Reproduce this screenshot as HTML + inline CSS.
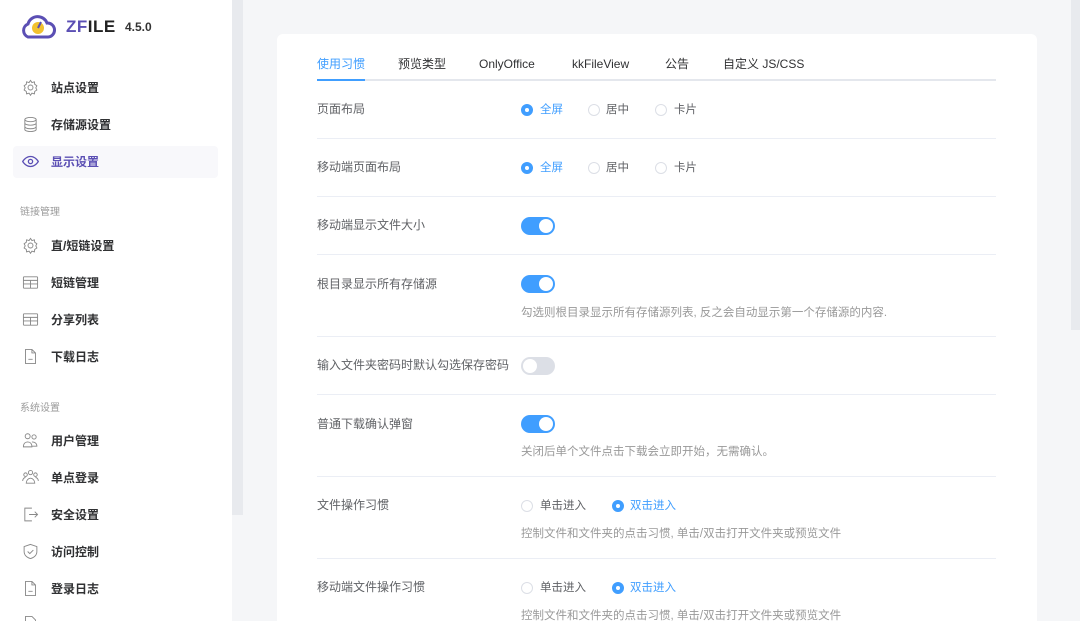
<!DOCTYPE html><html><head><meta charset="utf-8"><style>
*{margin:0;padding:0;box-sizing:border-box}
html,body{width:1080px;height:621px;overflow:hidden}
body{background:#f5f6f8;font-family:"Liberation Sans","Noto Sans CJK SC",sans-serif;position:relative}
div{line-height:14px}
.a{position:absolute;white-space:nowrap}
#side{position:absolute;left:0;top:0;width:232px;height:621px;background:#fff}
#sb{position:absolute;left:232px;top:0;width:11px;height:515px;background:#e8eaee}
.nav{position:absolute;left:51px;font-size:12px;color:#303133;font-weight:bold}
.grp{position:absolute;left:20px;font-size:10px;color:#9a9a9a}
.ic{position:absolute;left:22px;width:17px;height:17px}
#card{position:absolute;left:277px;top:34px;width:760px;height:587px;background:#fff;border-radius:6px 6px 0 0}
.tab{position:absolute;top:57px;font-size:12px;color:#303133}
.lbl{position:absolute;left:317px;font-size:12px;color:#606266}
.hr{position:absolute;left:317px;width:679px;height:1px;background:#ebeef5}
.hint{position:absolute;left:521px;font-size:11.5px;color:#999}
.rd{position:absolute;width:12px;height:12px;border-radius:50%;border:1px solid #dcdfe6;background:#fff}
.rd.on{background:#409eff;border-color:#409eff}
.rd.on:after{content:"";position:absolute;left:3px;top:3px;width:4px;height:4px;border-radius:50%;background:#fff}
.rt{position:absolute;font-size:11.5px;color:#606266}
.rt.on{color:#409eff}
.sw{position:absolute;left:521px;width:34px;height:18px;border-radius:9px;background:#409eff}
.sw:after{content:"";position:absolute;right:2px;top:2px;width:14px;height:14px;border-radius:50%;background:#fff}
.sw.off{background:#dcdfe6}.sw.off:after{right:auto;left:2px}
</style></head><body>
<div id="side">
<svg class="a" style="left:20px;top:13px" width="36" height="28" viewBox="0 0 36 28"><path d="M8 24 A7 7 0 0 1 8 11 A10 10 0 0 1 27 10 A7 7 0 0 1 28 24 Z" fill="none" stroke="#5b4fb4" stroke-width="3"/><circle cx="18" cy="15" r="6" fill="#f2c12e"/><path d="M18 15 L21 9" stroke="#5b4fb4" stroke-width="2"/></svg>
<div class="a" style="left:66px;top:18px;font-size:17px;line-height:18px;font-weight:bold;letter-spacing:0.5px;color:#222"><span style="color:#5b4fb4">ZF</span>ILE</div>
<div class="a" style="left:125px;top:20px;font-size:12px;font-weight:bold;color:#333">4.5.0</div>
<div class="a" style="left:13px;top:146px;width:205px;height:32px;background:#f8f8fb;border-radius:4px"></div>
<svg class="ic" style="top:79px" viewBox="0 0 24 24" fill="none" stroke="#888" stroke-width="1.3"><circle cx="12" cy="12" r="3.5"/><path d="M12 2l2 3 3.5-1 .5 3.5 3 2-1.5 3 1.5 3-3 2-.5 3.5-3.5-1-2 3-2-3-3.5 1-.5-3.5-3-2 1.5-3-1.5-3 3-2 .5-3.5 3.5 1z"/></svg>
<div class="nav" style="top:81px">站点设置</div>
<svg class="ic" style="top:116px" viewBox="0 0 24 24" fill="none" stroke="#888" stroke-width="1.3"><ellipse cx="12" cy="5" rx="8" ry="3"/><path d="M4 5v14c0 1.7 3.6 3 8 3s8-1.3 8-3V5M4 10c0 1.7 3.6 3 8 3s8-1.3 8-3M4 15c0 1.7 3.6 3 8 3s8-1.3 8-3"/></svg>
<div class="nav" style="top:118px">存储源设置</div>
<svg class="ic" style="top:153px" viewBox="0 0 24 24" fill="none" stroke="#5b4fb4" stroke-width="1.8"><path d="M1 12s4-7 11-7 11 7 11 7-4 7-11 7S1 12 1 12z"/><circle cx="12" cy="12" r="3"/></svg>
<div class="nav" style="top:155px;color:#5b4fb4">显示设置</div>
<div class="grp" style="top:206px">链接管理</div>
<svg class="ic" style="top:237px" viewBox="0 0 24 24" fill="none" stroke="#888" stroke-width="1.3"><circle cx="12" cy="12" r="3.5"/><path d="M12 2l2 3 3.5-1 .5 3.5 3 2-1.5 3 1.5 3-3 2-.5 3.5-3.5-1-2 3-2-3-3.5 1-.5-3.5-3-2 1.5-3-1.5-3 3-2 .5-3.5 3.5 1z"/></svg>
<div class="nav" style="top:239px">直/短链设置</div>
<svg class="ic" style="top:274px" viewBox="0 0 24 24" fill="none" stroke="#888" stroke-width="1.3"><rect x="2" y="4" width="20" height="16" rx="1"/><path d="M2 9h20M2 14h20M12 9v11"/></svg>
<div class="nav" style="top:276px">短链管理</div>
<svg class="ic" style="top:311px" viewBox="0 0 24 24" fill="none" stroke="#888" stroke-width="1.3"><rect x="2" y="4" width="20" height="16" rx="1"/><path d="M2 9h20M2 14h20M12 9v11"/></svg>
<div class="nav" style="top:313px">分享列表</div>
<svg class="ic" style="top:348px" viewBox="0 0 24 24" fill="none" stroke="#888" stroke-width="1.3"><path d="M5 2h9l5 5v15H5z M14 2v5h5M9 16h6"/></svg>
<div class="nav" style="top:350px">下载日志</div>
<div class="grp" style="top:402px">系统设置</div>
<svg class="ic" style="top:432px" viewBox="0 0 24 24" fill="none" stroke="#888" stroke-width="1.3"><circle cx="8" cy="6" r="3.5"/><circle cx="17" cy="7" r="3"/><path d="M2 21c0-5 3-7 6-7s6 2 6 7zM14 14c4 0 7 2 7 6h-7"/></svg>
<div class="nav" style="top:434px">用户管理</div>
<svg class="ic" style="top:469px" viewBox="0 0 24 24" fill="none" stroke="#888" stroke-width="1.3"><circle cx="12" cy="5" r="3"/><circle cx="5" cy="8" r="2.5"/><circle cx="19" cy="8" r="2.5"/><path d="M6 20c0-4 3-7 6-7s6 3 6 7zM1 17c0-3 2-5 4-5M23 17c0-3-2-5-4-5"/></svg>
<div class="nav" style="top:471px">单点登录</div>
<svg class="ic" style="top:506px" viewBox="0 0 24 24" fill="none" stroke="#888" stroke-width="1.3"><path d="M14 3H4v18h10M10 12h12M18 8l4 4-4 4"/></svg>
<div class="nav" style="top:508px">安全设置</div>
<svg class="ic" style="top:543px" viewBox="0 0 24 24" fill="none" stroke="#888" stroke-width="1.3"><path d="M12 2l9 3v7c0 5-4 9-9 10-5-1-9-5-9-10V5z M8 12l3 3 5-5"/></svg>
<div class="nav" style="top:545px">访问控制</div>
<svg class="ic" style="top:580px" viewBox="0 0 24 24" fill="none" stroke="#888" stroke-width="1.3"><path d="M5 2h9l5 5v15H5z M14 2v5h5M9 16h6"/></svg>
<div class="nav" style="top:582px">登录日志</div>
<svg class="ic" style="top:615px" viewBox="0 0 24 24" fill="none" stroke="#888" stroke-width="1.3"><path d="M5 2h9l5 5v15H5z"/></svg>
</div>
<div id="sb"></div>
<div class="a" style="left:1071px;top:0;width:9px;height:330px;background:#e8eaee"></div>
<div id="card"></div>
<div class="tab" style="left:317px;color:#409eff">使用习惯</div>
<div class="tab" style="left:398px">预览类型</div>
<div class="tab" style="left:479px">OnlyOffice</div>
<div class="tab" style="left:572px">kkFileView</div>
<div class="tab" style="left:665px">公告</div>
<div class="tab" style="left:723px">自定义 JS/CSS</div>
<div class="hr" style="top:79px;height:2px;background:#e4e7ed"></div>
<div class="a" style="left:317px;top:79px;width:48px;height:2px;background:#409eff"></div>

<div class="lbl" style="top:102px">页面布局</div>
<div class="rd on" style="left:521px;top:104px"></div><div class="rt on" style="left:540px;top:103px">全屏</div>
<div class="rd" style="left:588px;top:104px"></div><div class="rt" style="left:606px;top:103px">居中</div>
<div class="rd" style="left:655px;top:104px"></div><div class="rt" style="left:674px;top:103px">卡片</div>
<div class="hr" style="top:138px"></div>

<div class="lbl" style="top:160px">移动端页面布局</div>
<div class="rd on" style="left:521px;top:162px"></div><div class="rt on" style="left:540px;top:161px">全屏</div>
<div class="rd" style="left:588px;top:162px"></div><div class="rt" style="left:606px;top:161px">居中</div>
<div class="rd" style="left:655px;top:162px"></div><div class="rt" style="left:674px;top:161px">卡片</div>
<div class="hr" style="top:196px"></div>

<div class="lbl" style="top:218px">移动端显示文件大小</div>
<div class="sw" style="top:217px"></div>
<div class="hr" style="top:254px"></div>

<div class="lbl" style="top:277px">根目录显示所有存储源</div>
<div class="sw" style="top:275px"></div>
<div class="hint" style="top:306px">勾选则根目录显示所有存储源列表, 反之会自动显示第一个存储源的内容.</div>
<div class="hr" style="top:336px"></div>

<div class="lbl" style="top:358px">输入文件夹密码时默认勾选保存密码</div>
<div class="sw off" style="top:357px"></div>
<div class="hr" style="top:394px"></div>

<div class="lbl" style="top:417px">普通下载确认弹窗</div>
<div class="sw" style="top:415px"></div>
<div class="hint" style="top:445px">关闭后单个文件点击下载会立即开始，无需确认。</div>
<div class="hr" style="top:476px"></div>

<div class="lbl" style="top:498px">文件操作习惯</div>
<div class="rd" style="left:521px;top:500px"></div><div class="rt" style="left:540px;top:499px">单击进入</div>
<div class="rd on" style="left:612px;top:500px"></div><div class="rt on" style="left:630px;top:499px">双击进入</div>
<div class="hint" style="top:527px">控制文件和文件夹的点击习惯, 单击/双击打开文件夹或预览文件</div>
<div class="hr" style="top:558px"></div>

<div class="lbl" style="top:580px">移动端文件操作习惯</div>
<div class="rd" style="left:521px;top:582px"></div><div class="rt" style="left:540px;top:581px">单击进入</div>
<div class="rd on" style="left:612px;top:582px"></div><div class="rt on" style="left:630px;top:581px">双击进入</div>
<div class="hint" style="top:609px">控制文件和文件夹的点击习惯, 单击/双击打开文件夹或预览文件</div>
</body></html>
